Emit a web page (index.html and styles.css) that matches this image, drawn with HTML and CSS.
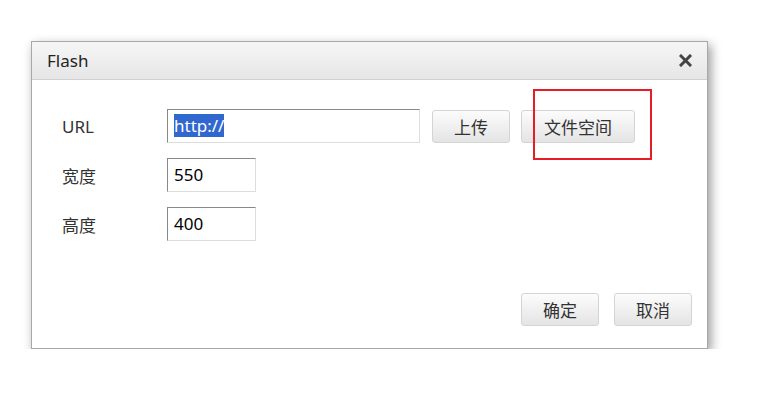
FILE: index.html
```html
<!DOCTYPE html>
<html lang="zh-CN">

<head>
    <meta charset="UTF-8">
    <title>Flash</title>
    <link rel="stylesheet" href="styles.css">
</head>

<body>
    <div id="dialog">
        <div id="dialog-head">
            <span class="title">Flash</span>
            <svg class="close" width="13" height="13" viewBox="0 0 13 13">
                <path d="M2 2 L11 11 M11 2 L2 11" stroke="#444" stroke-width="3" stroke-linecap="square"/>
            </svg>
        </div>
        <div id="dialog-body">
            <div class="row">
                <div class="label">URL</div>
                <div class="field wide"><span class="sel">http://</span></div>
                <div class="btn upload">上传</div>
                <div class="btn space">文件空间</div>
            </div>
            <div class="row">
                <div class="label">宽度</div>
                <div class="field">550</div>
            </div>
            <div class="row">
                <div class="label">高度</div>
                <div class="field">400</div>
            </div>
        </div>
        <div id="dialog-foot">
            <div class="btn">确定</div>
            <div class="btn">取消</div>
        </div>
        <div class="mark"></div>
    </div>
</body>

</html>
```
FILE: styles.css
```css
body {
    margin: 0;
    background-color: #fff;
    font-family: "Noto Sans", "Noto Sans CJK SC", sans-serif;
    color: #333;
}

#dialog {
    position: relative;
    margin: 41px 0 0 31px;
    width: 677px;
    height: 308px;
    box-sizing: border-box;
    border: 1px solid #a8a8a8;
    background-color: #fff;
    box-shadow: 3px 4px 10px rgba(0, 0, 0, 0.4);
    display: flex;
    flex-direction: column;
}

#dialog-head {
    height: 37px;
    border-bottom: 1px solid #d0d0d0;
    background: linear-gradient(#f6f6f6, #e6e6e6);
    display: flex;
    align-items: center;
    justify-content: space-between;
    padding: 0 15px 0 15px;
}

.title {
    font-size: 17px;
    color: #222;
}

#dialog-body {
    padding: 29px 0 0 30px;
    display: flex;
    flex-direction: column;
    gap: 15px;
    flex: 1;
}

.row {
    display: flex;
    align-items: center;
}

.label {
    width: 105px;
    font-size: 17px;
    color: #333;
}

.field {
    width: 89px;
    height: 34px;
    box-sizing: border-box;
    border: 1px solid #ddd;
    border-top-color: #888;
    border-left-color: #888;
    font-size: 17px;
    color: #000;
    padding-left: 6px;
    line-height: 31px;
}

.field.wide {
    width: 253px;
}

.sel {
    background-color: #3168d0;
    color: #fff;
}

.btn {
    width: 78px;
    height: 33px;
    box-sizing: border-box;
    border: 1px solid #d4d4d4;
    border-radius: 3px;
    background: linear-gradient(#fcfcfc, #e4e4e4);
    font-size: 17px;
    color: #333;
    display: flex;
    align-items: center;
    justify-content: center;
}

.upload {
    margin-left: 12px;
}

.space {
    width: 114px;
    margin-left: 11px;
}

#dialog-foot {
    display: flex;
    justify-content: flex-end;
    gap: 15px;
    padding: 0 15px 22px 0;
}

.mark {
    position: absolute;
    left: 501px;
    top: 47px;
    width: 119px;
    height: 71px;
    box-sizing: border-box;
    border: 2px solid #e81c24;
}
```
